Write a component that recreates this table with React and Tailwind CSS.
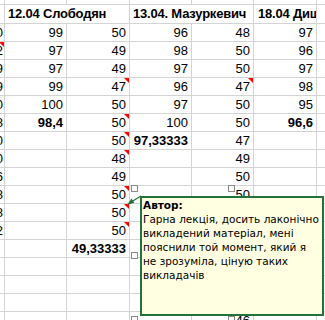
import React from 'react';

// column A is only a sliver on the left; its numbers show just the last digit
// '^' = red comment corner, '*' = bold
const data = [
  ['100', '99', '50', '96', '48', '97'],
  ['92^', '97', '49', '98', '50', '96'],
  ['99', '97', '49', '97', '50', '97'],
  ['99', '99', '47^', '96', '47^', '98'],
  ['100', '100', '50', '97', '50', '95'],
  ['98', '98,4*', '50^', '100', '50', '96,6*'],
  ['100', '', '50^', '97,33333*', '47', ''],
  ['100', '', '48^', '', '49', ''],
  ['96', '', '49', '', '50', ''],
  ['98', '', '50^', '', '50', ''],
  ['98', '', '50^', '', '', ''],
  ['92', '', '50^', '', '', ''],
  ['', '', '49,33333*', '', '', ''],
  ['', '', '', '', '', ''],
  ['', '', '', '', '', ''],
  ['', '', '', '', '', ''],
  ['', '', '', '', '46', ''],
];

const gridCols = 'grid grid-cols-[4px_61px_62px_61px_61px_62px_8px] gap-px';

const Cell = ({ raw, first }) => {
  let v = raw;
  const red = v.endsWith('^');
  if (red) v = v.slice(0, -1);
  const bold = v.endsWith('*');
  if (bold) v = v.slice(0, -1);
  return (
    <div
      className={`relative bg-white h-[17px] flex items-center justify-end overflow-hidden whitespace-nowrap leading-[17px] ${
        first ? 'pr-px' : 'pr-[3px]'
      } ${bold ? 'font-bold' : ''}`}
    >
      {v}
      {red && (
        <span className="absolute top-0 right-0 w-0 h-0 border-t-[5px] border-l-[5px] border-t-[#ff0000] border-l-transparent" />
      )}
    </div>
  );
};

const Handle = ({ className }) => (
  <div className={`absolute w-[7px] h-[7px] bg-white border border-[#8a8a8a] ${className}`} />
);

const App = () => {
  return (
    <div className="relative w-[325px] h-[320px] overflow-hidden bg-white text-black text-[13px] font-['Liberation_Sans',Arial,sans-serif]">
      <div className={`${gridCols} bg-[#d4d4d4]`}>
        {/* partial row above the headers */}
        {Array.from({ length: 7 }).map((_, i) => (
          <div key={i} className="bg-white h-[4px]" />
        ))}

        {/* header row */}
        <div className="bg-white h-[18px]" />
        <div className="col-span-2 bg-white h-[18px] flex items-center pl-[3px] font-bold tracking-[-0.2px] whitespace-nowrap overflow-hidden">
          12.04 Слободян
        </div>
        <div className="col-span-2 bg-white h-[18px] flex items-center pl-[3px] font-bold tracking-[-0.2px] whitespace-nowrap overflow-hidden">
          13.04. Мазуркевич
        </div>
        <div className="bg-white h-[18px] flex items-center pl-[4px] font-bold tracking-[-0.2px] whitespace-nowrap overflow-hidden">
          18.04 Дишлевий
        </div>
        <div className="bg-white h-[18px]" />

        {data.map((row, r) => (
          <React.Fragment key={r}>
            {row.map((v, c) => (
              <Cell key={c} raw={v} first={c === 0} />
            ))}
            <div className="bg-white h-[17px]" />
          </React.Fragment>
        ))}
      </div>

      {/* comment callout */}
      <svg className="absolute inset-0 pointer-events-none" width="325" height="320">
        <line x1="141" y1="196" x2="131" y2="202" stroke="#22733b" strokeWidth="1.2" />
        <polygon points="127,205 134.3,202.7 131.5,198.5" fill="#22733b" />
      </svg>

      <div className="absolute left-[140px] top-[196px] w-[184px] h-[120px] bg-[#ffffe1] border-2 border-[#22733b] pl-px text-[10.5px] leading-[14px] font-['DejaVu_Sans',Verdana,sans-serif] whitespace-nowrap">
        <div className="font-bold">Автор:</div>
        <div>Гарна лекція, досить лаконічно</div>
        <div>викладений матеріал, мені</div>
        <div>пояснили той момент, який я</div>
        <div>не зрозуміла, ціную таких</div>
        <div>викладачів</div>
      </div>

      <Handle className="left-[131px] top-[185px]" />
      <Handle className="left-[228px] top-[185px]" />
      <Handle className="left-[131px] top-[252px]" />
      <Handle className="left-[131px] top-[316px]" />
      <Handle className="left-[228px] top-[316px]" />
    </div>
  );
};

export default App;
